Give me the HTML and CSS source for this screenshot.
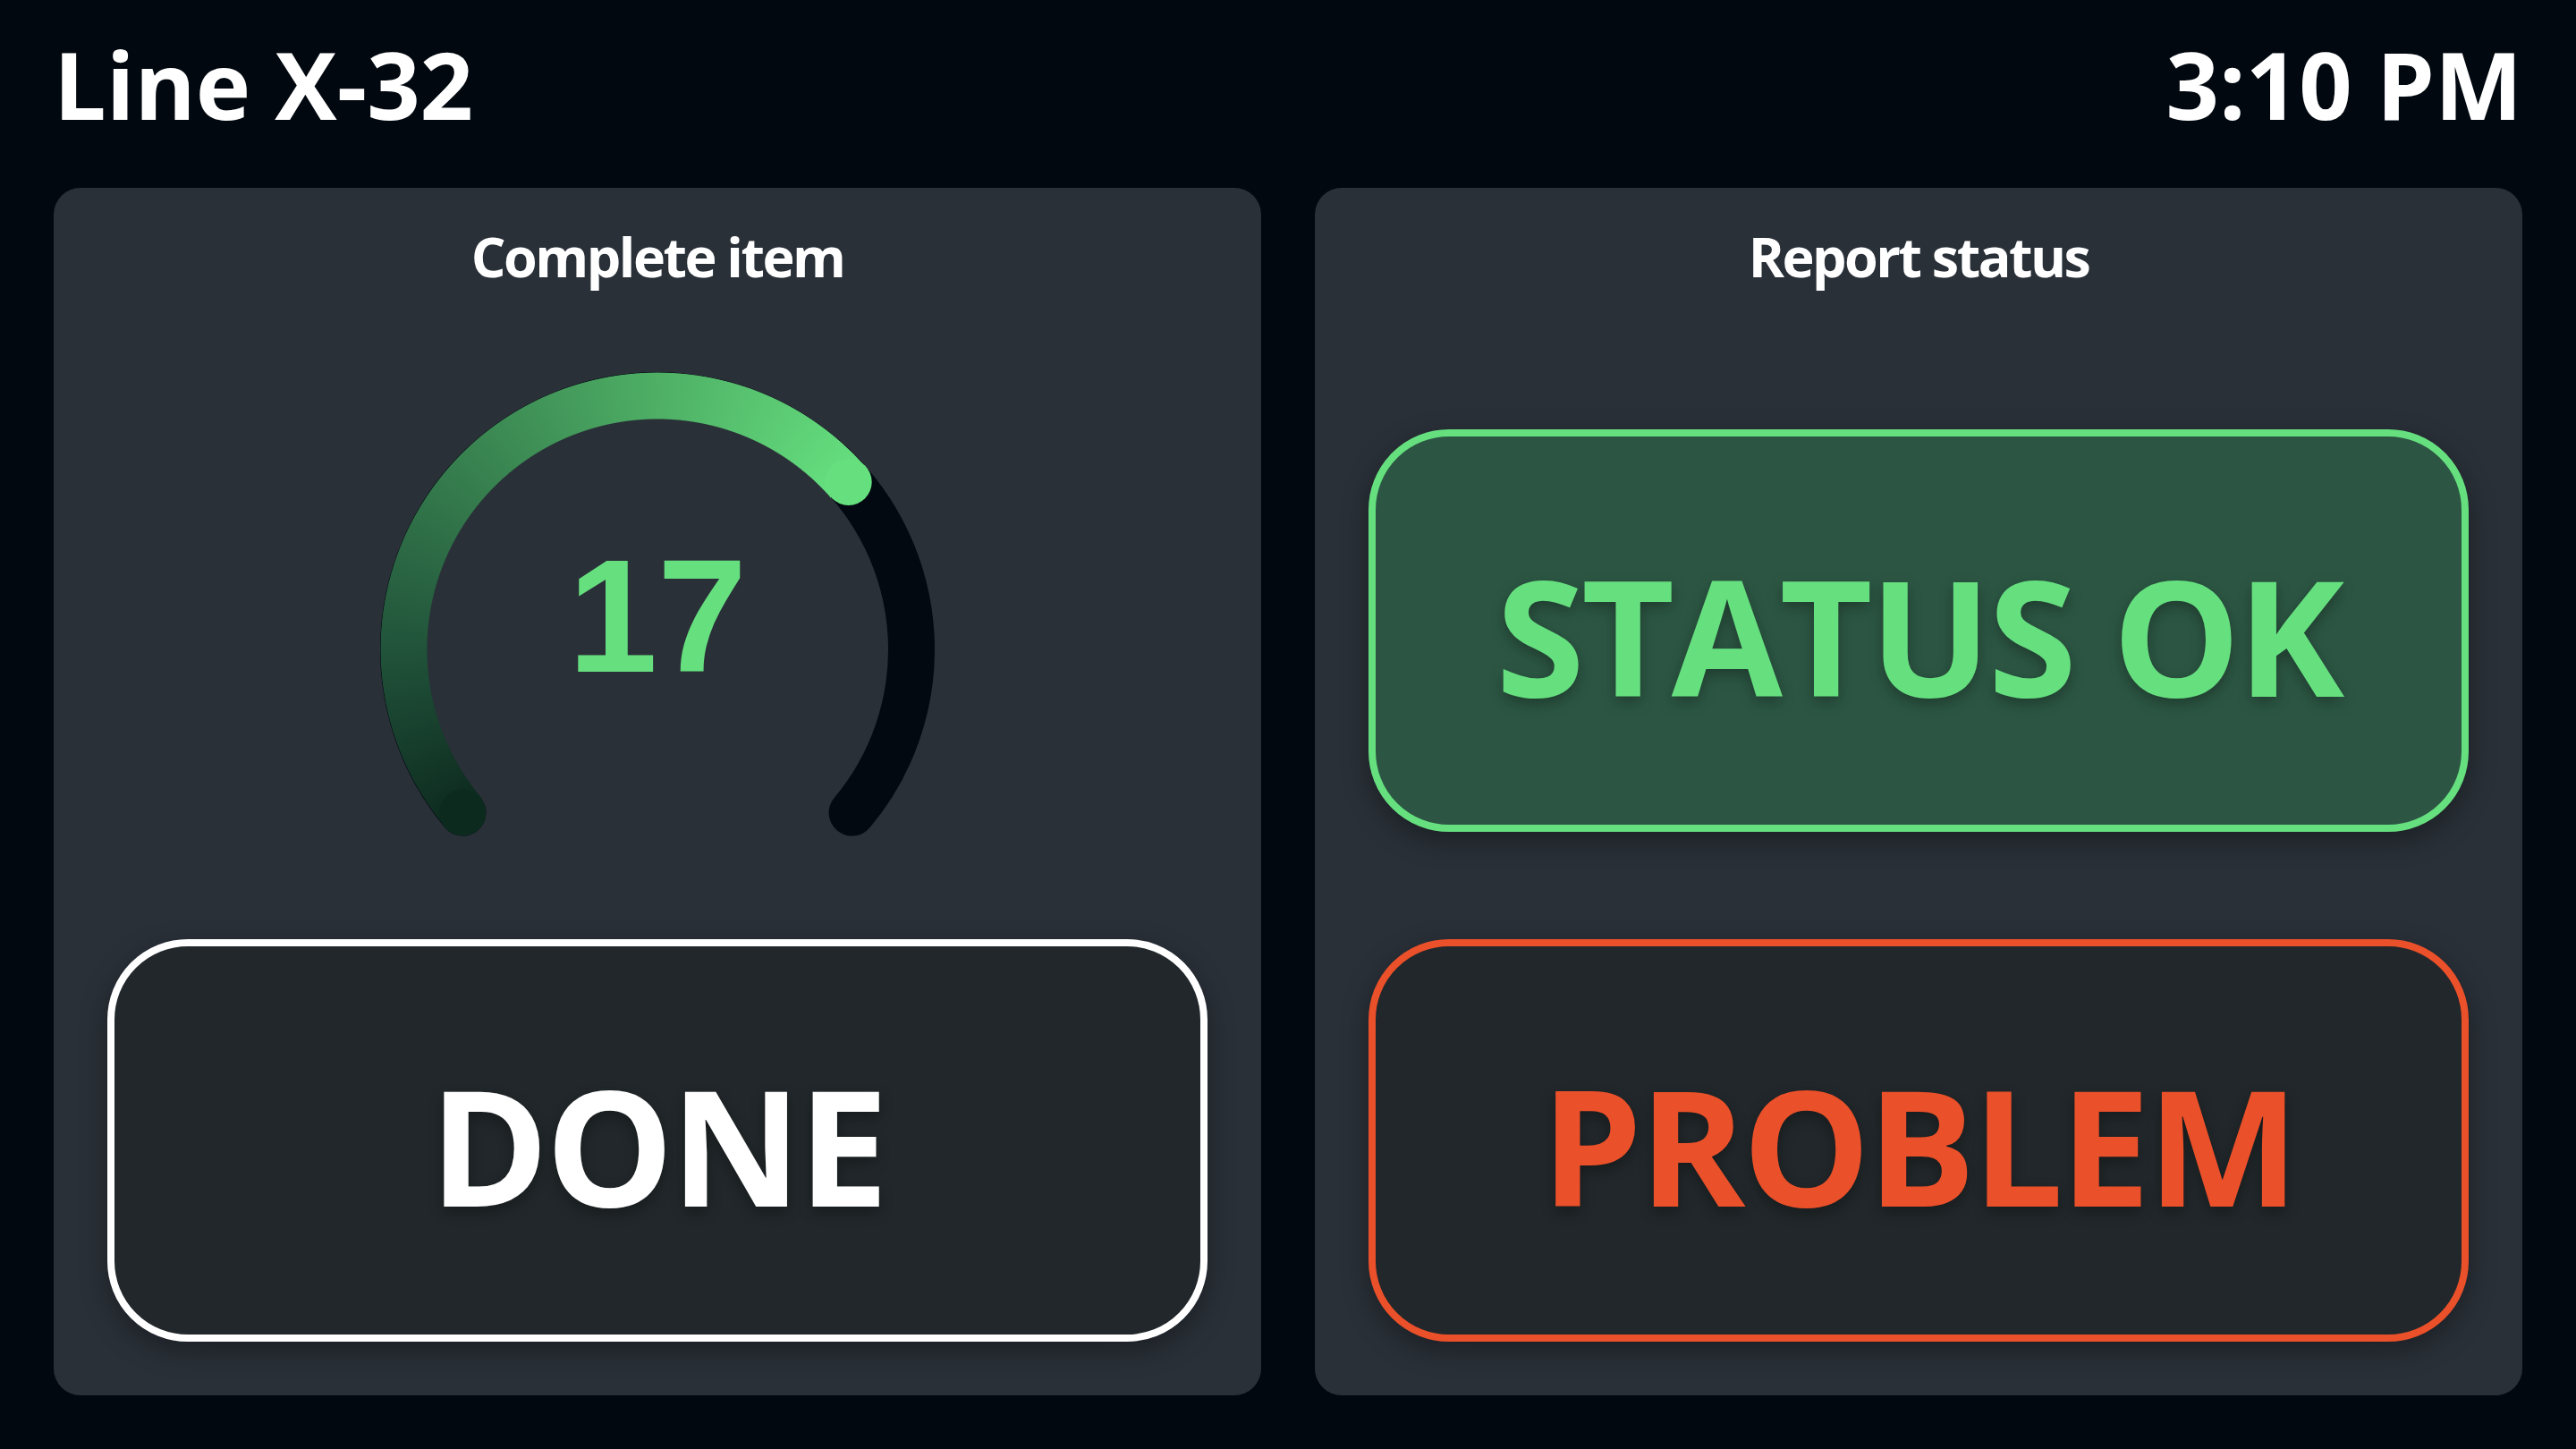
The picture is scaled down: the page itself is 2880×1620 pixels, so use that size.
FILE: index.html
```html
<!DOCTYPE html>
<html lang="en">
<head>
<meta charset="utf-8">
<title>Line X-32</title>
<link rel="stylesheet" href="styles.css">
</head>
<body>
<div class="screen">
  <header class="topbar">
    <div class="line-name">Line X-32</div>
    <div class="clock">3:10 PM</div>
  </header>
  <main class="panels">
    <section class="panel">
      <h2 class="panel-title">Complete item</h2>
      <div class="gauge-area">
        <div class="gauge">
          <svg class="gauge-track" width="620" height="620" viewBox="0 0 620 620">
            <path d="M 92.4 492.6 A 284 284 0 1 1 527.6 492.6" fill="none" stroke="#020910" stroke-width="52" stroke-linecap="round"/>
          </svg>
          <div class="gauge-fill"></div>
          <svg class="gauge-caps" width="620" height="620" viewBox="0 0 620 620">
            <circle cx="92.4" cy="492.6" r="26" fill="#0d2a1f"/>
            <circle cx="523.7" cy="122.9" r="26" fill="#66e07f"/>
          </svg>
          <div class="gauge-value">17</div>
        </div>
      </div>
      <button class="action action-done">DONE</button>
    </section>
    <section class="panel">
      <h2 class="panel-title">Report status</h2>
      <div class="status-stack">
        <button class="action action-ok">STATUS OK</button>
        <button class="action action-problem">PROBLEM</button>
      </div>
    </section>
  </main>
</div>
</body>
</html>
```

FILE: styles.css
```css
* { box-sizing: border-box; }

html, body {
  margin: 0;
  padding: 0;
  background: #020810;
}

body {
  font-family: "Open Sans", "Noto Sans", "Liberation Sans", sans-serif;
  color: #ffffff;
}

.screen {
  width: 2880px;
  height: 1620px;
  display: flex;
  flex-direction: column;
  padding: 0 60px 60px;
}

.topbar {
  height: 210px;
  flex: none;
  display: flex;
  justify-content: space-between;
  align-items: center;
  padding-bottom: 22px;
  font-size: 104px;
  font-weight: 700;
  line-height: 1;
}

.panels {
  flex: 1;
  display: grid;
  grid-template-columns: 1fr 1fr;
  gap: 60px;
}

.panel {
  background: #2a3038;
  border-radius: 30px;
  padding: 46px 60px 60px;
  display: flex;
  flex-direction: column;
}

.panel-title {
  margin: 0;
  text-align: center;
  font-size: 61px;
  font-weight: 700;
  letter-spacing: -2.5px;
  line-height: 1;
}

.gauge-area {
  flex: 1;
  display: flex;
  justify-content: center;
  align-items: flex-end;
  padding-bottom: 14px;
}

.gauge {
  position: relative;
  width: 620px;
  height: 620px;
}

.gauge-track,
.gauge-caps {
  position: absolute;
  left: 0;
  top: 0;
}

.gauge-fill {
  position: absolute;
  inset: 0;
  border-radius: 50%;
  background: conic-gradient(from 230deg, #0d2a1f 0deg, #21533a 40deg, #4eaf65 130deg, #66e07f 178.8deg, transparent 178.8deg);
  -webkit-mask: radial-gradient(circle closest-side, transparent 257px, #000 258px, #000 309px, transparent 310px);
  mask: radial-gradient(circle closest-side, transparent 257px, #000 258px, #000 309px, transparent 310px);
}

.gauge-value {
  position: absolute;
  left: 0;
  right: 0;
  top: 183px;
  text-align: center;
  font-family: "Liberation Sans", Arial, sans-serif;
  font-weight: 700;
  font-size: 180px;
  line-height: 1;
  color: #66e07f;
}

.action {
  height: 450px;
  flex: none;
  width: 100%;
  border-radius: 90px;
  border: 8px solid #ffffff;
  background: #21272a;
  color: #ffffff;
  font-family: inherit;
  font-size: 180px;
  font-weight: 700;
  letter-spacing: -3.5px;
  line-height: 1;
  box-shadow: 0 10px 30px rgba(0, 0, 0, 0.35);
  text-shadow: 0 6px 16px rgba(0, 0, 0, 0.3);
  padding: 10px 0 0;
  cursor: pointer;
}

.action-ok {
  border-color: #66e07f;
  background: #2c5643;
  color: #66e07f;
}

.action-problem {
  border-color: #ea5029;
  color: #ea5029;
}

.status-stack {
  flex: 1;
  display: flex;
  flex-direction: column;
  justify-content: flex-end;
  gap: 120px;
}
```
